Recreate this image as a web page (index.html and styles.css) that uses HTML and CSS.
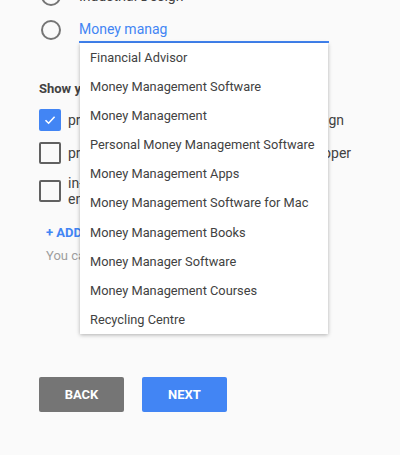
FILE: index.html
```html
<!DOCTYPE html>
<html lang="en">
<head>
  <meta charset="UTF-8" />
  <title>Profile</title>
  <link rel="stylesheet" href="styles.css">
</head>
<body>
  <div class="page">

    <div class="radio-list">
      <div class="radio-row">
        <span class="radio"></span>
        <span class="radio-label">Industrial Design</span>
      </div>
      <div class="radio-row">
        <span class="radio"></span>
        <div class="field">
          <div class="field-text">Money manag</div>
          <ul class="dropdown">
            <li>Financial Advisor</li>
            <li>Money Management Software</li>
            <li>Money Management</li>
            <li>Personal Money Management Software</li>
            <li>Money Management Apps</li>
            <li>Money Management Software for Mac</li>
            <li>Money Management Books</li>
            <li>Money Manager Software</li>
            <li>Money Management Courses</li>
            <li>Recycling Centre</li>
          </ul>
        </div>
      </div>
    </div>

    <h3 class="section-title">Show your profile to people looking for</h3>

    <div class="check-list">
      <div class="check-row">
        <span class="checkbox checked">
          <svg width="14" height="14" viewBox="0 0 14 14"><path d="M2.5 7.2 L5.6 10.2 L11.6 3.8" fill="none" stroke="#fff" stroke-width="1.6"/></svg>
        </span>
        <span class="check-label nowrap">product designers for every industrial design</span>
      </div>
      <div class="check-row">
        <span class="checkbox"></span>
        <span class="check-label nowrap">professional web, iOS &amp; mobile app developer</span>
      </div>
      <div class="check-row">
        <span class="checkbox"></span>
        <span class="check-label wrap">in-house design teams and freelance engineers</span>
      </div>
    </div>

    <div class="add-link">+ ADD ANOTHER ROLE</div>
    <div class="hint">You can add up to five roles</div>

    <div class="actions">
      <button class="btn btn-back">BACK</button>
      <button class="btn btn-next">NEXT</button>
    </div>

  </div>
</body>
</html>
```

FILE: styles.css
```css
* {
  margin: 0;
  padding: 0;
  box-sizing: border-box;
}
html, body {
  width: 100%;
  height: 100%;
  background-color: #fafafa;
  font-family: Roboto, 'Liberation Sans', sans-serif;
  font-size: 13px;
  color: #424242;
  overflow: hidden;
}
.page {
  padding-left: 39px;
  transform: translateY(-16px);
}
.radio-list {
  display: flex;
  flex-direction: column;
  gap: 10px;
}
.radio-row {
  display: flex;
  align-items: center;
  gap: 18px;
  height: 24px;
  padding-left: 2px;
}
.radio {
  flex: none;
  width: 20px;
  height: 20px;
  border: 2px solid #757575;
  border-radius: 50%;
}
.radio-label {
  font-size: 14px;
}
.field {
  position: relative;
  width: 250px;
  height: 24px;
  border-bottom: 2px solid #4285f4;
  margin-top: 2px;
}
.field-text {
  color: #4285f4;
  font-size: 14px;
  line-height: 20px;
}
.dropdown {
  position: absolute;
  top: calc(100% + 2px);
  left: 1px;
  width: 248px;
  list-style: none;
  background: #fff;
  box-shadow: 0 1px 4px rgba(0, 0, 0, 0.3);
  z-index: 10;
}
.dropdown li {
  height: 29.1px;
  line-height: 29px;
  padding-left: 10px;
  color: #424242;
  font-size: 12.8px;
  white-space: nowrap;
}
.section-title {
  margin-top: 39px;
  font-size: 13px;
  font-weight: bold;
  line-height: 16px;
  color: #424242;
}
.check-list {
  margin-top: 12px;
  display: flex;
  flex-direction: column;
  gap: 11px;
}
.check-row {
  display: flex;
  align-items: center;
  gap: 7px;
}
.checkbox {
  flex: none;
  width: 22px;
  height: 22px;
  border: 2px solid #616161;
  border-radius: 2px;
  display: flex;
  align-items: center;
  justify-content: center;
}
.checkbox.checked {
  background: #4285f4;
  border-color: #4285f4;
}
.check-label {
  font-size: 14px;
  line-height: 16px;
}
.nowrap {
  white-space: nowrap;
}
.wrap {
  width: 285px;
}
.add-link {
  margin-top: 18px;
  padding-left: 7px;
  color: #4285f4;
  font-weight: bold;
  font-size: 13px;
  line-height: 16px;
}
.hint {
  margin-top: 7px;
  padding-left: 7px;
  color: #9e9e9e;
  font-size: 13px;
  line-height: 16px;
}
.actions {
  margin-top: 113px;
  display: flex;
  gap: 18px;
}
.btn {
  width: 85px;
  height: 35px;
  border: none;
  border-radius: 2px;
  color: #fff;
  font-family: Roboto, 'Liberation Sans', sans-serif;
  font-weight: bold;
  font-size: 13px;
  cursor: pointer;
}
.btn-back {
  background: #757575;
}
.btn-next {
  background: #4285f4;
}
```
